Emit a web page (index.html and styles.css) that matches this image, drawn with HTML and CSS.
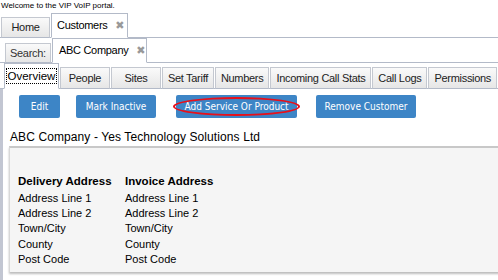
FILE: index.html
```html
<!DOCTYPE html>
<html lang="en">
<head>
    <meta charset="UTF-8">
    <title>Customers</title>
    <link rel="stylesheet" href="styles.css">
</head>
<body>
    <div class="welcome">Welcome to the VIP VoIP portal.</div>

    <div class="tab-row main-tabs">
        <div class="tab">Home</div>
        <div class="tab active">Customers <span class="close">&#10006;</span></div>
    </div>

    <div class="tab-row search-tabs">
        <div class="tab label">Search:</div>
        <div class="tab active">ABC Company <span class="close">&#10006;</span></div>
    </div>

    <div class="tab-row sub-tabs">
        <div class="tab active"><span class="focus">Overview</span></div>
        <div class="tab">People</div>
        <div class="tab">Sites</div>
        <div class="tab">Set Tariff</div>
        <div class="tab">Numbers</div>
        <div class="tab">Incoming Call Stats</div>
        <div class="tab">Call Logs</div>
        <div class="tab">Permissions</div>
    </div>

    <div class="content">
        <div class="actions">
            <button class="btn">Edit</button>
            <button class="btn">Mark Inactive</button>
            <button class="btn marked">Add Service Or Product</button>
            <button class="btn">Remove Customer</button>
        </div>
        <h2 class="company">ABC Company - Yes Technology Solutions Ltd</h2>
        <div class="panel">
            <div class="address">
                <h3>Delivery Address</h3>
                <p>Address Line 1</p>
                <p>Address Line 2</p>
                <p>Town/City</p>
                <p>County</p>
                <p>Post Code</p>
            </div>
            <div class="address">
                <h3>Invoice Address</h3>
                <p>Address Line 1</p>
                <p>Address Line 2</p>
                <p>Town/City</p>
                <p>County</p>
                <p>Post Code</p>
            </div>
        </div>
    </div>
</body>
</html>
```

FILE: styles.css
```css
body {
    margin: 0;
    font-family: "Liberation Sans", Arial, sans-serif;
    background-color: #fff;
    color: #000;
    overflow: hidden;
}
.welcome {
    font-size: 8px;
    height: 13px;
    line-height: 11px;
    padding-left: 1px;
}
.tab-row {
    display: flex;
    align-items: flex-end;
    border-bottom: 1px solid #b3bac8;
}
.tab {
    box-sizing: border-box;
    height: 21px;
    margin-bottom: -1px;
    margin-right: 1px;
    padding: 0 7px;
    font-size: 11px;
    letter-spacing: -0.3px;
    line-height: 19px;
    color: #222;
    background: linear-gradient(#fafafa, #e6e6e6);
    border: 1px solid #c4c8d0;
    border-bottom-color: #b3bac8;
    white-space: nowrap;
}
.tab.active {
    height: 25px;
    line-height: 23px;
    background: #fff;
    border-color: #b3bac8;
    border-bottom-color: #fff;
    color: #000;
}
.close {
    color: #999;
    font-family: "DejaVu Sans", sans-serif;
    font-size: 11px;
    font-weight: bold;
    margin-left: 5px;
}
.main-tabs {
    height: 24px;
    padding-left: 1px;
}
.main-tabs .tab:first-child {
    width: 49px;
    text-align: center;
}
.main-tabs .tab.active {
    padding: 0 5px;
    width: 77px;
}
.search-tabs {
    height: 24px;
    padding-left: 5px;
}
.search-tabs .tab.label {
    height: 20px;
    line-height: 18px;
    padding: 0 4px;
    width: 46px;
    color: #333;
}
.search-tabs .tab.active {
    width: 95px;
    padding: 0 6px;
}
.sub-tabs {
    height: 25px;
    padding-left: 4px;
}
.sub-tabs .tab {
    min-width: 50px;
    height: 22px;
    line-height: 20px;
    padding: 0 5px;
    text-align: center;
}
.sub-tabs .tab.active {
    width: 55px;
    height: 26px;
    line-height: 25px;
    padding: 0 1px;
    font-size: 11.5px;
    letter-spacing: 0;
}
.focus {
    outline: 1px dotted #000;
    padding: 1px 1px;
}
.content {
    border-left: 3px solid #c2c6d2;
    padding: 6px 0 0 6px;
    min-height: 185px;
}
.actions {
    display: flex;
    padding-left: 10px;
    gap: 16px;
}
.btn {
    height: 23px;
    padding: 0;
    border: none;
    border-radius: 2px;
    background-color: #3d85c6;
    color: #fff;
    font-family: "DejaVu Sans Condensed", "DejaVu Sans", sans-serif;
    font-stretch: condensed;
    font-size: 10px;
}
.actions .btn:nth-child(1) {
    width: 41px;
}
.actions .btn:nth-child(2) {
    width: 80px;
    margin-right: 4px;
}
.actions .btn:nth-child(3) {
    width: 121px;
    margin-right: 3px;
}
.actions .btn:nth-child(4) {
    width: 100px;
}
.marked {
    position: relative;
}
.marked::after {
    content: "";
    position: absolute;
    left: -3px;
    right: -3px;
    top: 2px;
    bottom: 2px;
    border: 2px solid #e8101a;
    border-radius: 50%;
}
.company {
    font-size: 12px;
    letter-spacing: 0.1px;
    font-weight: normal;
    margin: 12px 0 0 1px;
    height: 16px;
    line-height: 15px;
}
.panel {
    display: grid;
    grid-template-columns: 107px 120px;
    margin-right: -20px;
    padding: 26px 0 10px 8px;
    height: 88px;
    background-color: #f5f5f5;
    border-top: 2px solid #c8c8c8;
    border-left: 1px solid #d8d8d8;
    box-shadow: 0 2px 2px #bdbdbd;
}
.address h3 {
    font-size: 11.5px;
    margin: 0 0 2px 0;
    line-height: 15px;
}
.address p {
    font-size: 11px;
    margin: 0;
    line-height: 15.2px;
}
```
